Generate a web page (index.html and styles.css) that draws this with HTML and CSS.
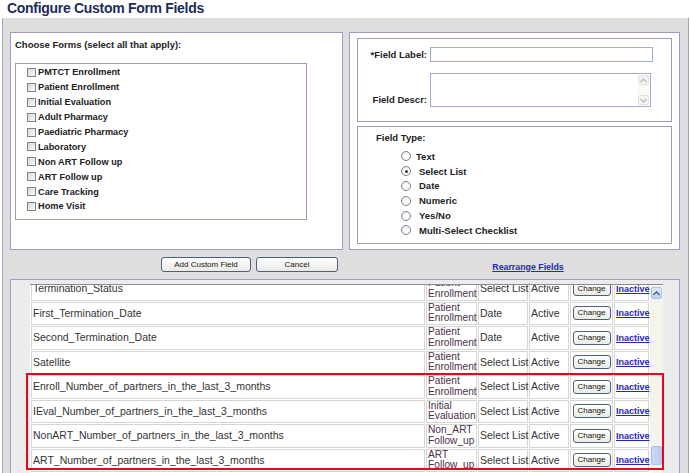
FILE: index.html
```html
<!DOCTYPE html>
<html>
<head>
<meta charset="utf-8">
<title>Configure Custom Form Fields</title>
<link rel="stylesheet" href="styles.css">
</head>
<body>
<h1 class="title">Configure Custom Form Fields</h1>
<div class="page">
  <div class="top">
    <section class="panel forms">
      <div class="label">Choose Forms (select all that apply):</div>
      <div class="formlist">
        <label class="check"><span class="cb"></span>PMTCT Enrollment</label>
        <label class="check"><span class="cb"></span>Patient Enrollment</label>
        <label class="check"><span class="cb"></span>Initial Evaluation</label>
        <label class="check"><span class="cb"></span>Adult Pharmacy</label>
        <label class="check"><span class="cb"></span>Paediatric Pharmacy</label>
        <label class="check"><span class="cb"></span>Laboratory</label>
        <label class="check"><span class="cb"></span>Non ART Follow up</label>
        <label class="check"><span class="cb"></span>ART Follow up</label>
        <label class="check"><span class="cb"></span>Care Tracking</label>
        <label class="check"><span class="cb"></span>Home Visit</label>
      </div>
    </section>
    <section class="panel fields">
      <div class="box1">
        <span class="flabel mid">*Field Label:</span>
        <span class="input"></span>
        <span class="flabel end">Field Descr:</span>
        <div class="ta">
          <div class="tscroll">
            <span class="tarr"><svg width="7" height="5" viewBox="0 0 7 5"><path d="M0.5 4 L3.5 1 L6.5 4" fill="none" stroke="#b9b9b9" stroke-width="1.2"/></svg></span>
            <span class="tarr"><svg width="7" height="5" viewBox="0 0 7 5"><path d="M0.5 1 L3.5 4 L6.5 1" fill="none" stroke="#b9b9b9" stroke-width="1.2"/></svg></span>
          </div>
        </div>
      </div>
      <div class="box2">
        <div class="label">Field Type:</div>
        <div class="radios">
          <div class="radio"><span class="rb"></span><span>Text</span></div>
          <div class="radio"><span class="rb on"></span><span class="pad">Select List</span></div>
          <div class="radio"><span class="rb"></span><span class="pad">Date</span></div>
          <div class="radio"><span class="rb"></span><span class="pad">Numeric</span></div>
          <div class="radio"><span class="rb"></span><span class="pad">Yes/No</span></div>
          <div class="radio"><span class="rb"></span><span class="pad">Multi-Select Checklist</span></div>
        </div>
      </div>
    </section>
  </div>
  <div class="actions">
    <div class="btns">
      <button class="btn add">Add Custom Field</button>
      <button class="btn cancel">Cancel</button>
    </div>
    <div class="rearr"><a href="#">Rearrange Fields</a></div>
  </div>
  <section class="panel list">
    <div class="scroller">
      <div class="viewport">
        <table class="grid">
          <colgroup>
            <col class="c-name"><col class="c-form"><col class="c-type"><col class="c-stat"><col class="c-chg"><col class="c-inact">
          </colgroup>
          <tbody>
            <tr><td>Termination_Status</td><td class="form">Patient Enrollment</td><td>Select List</td><td>Active</td><td class="chg"><button class="btn small">Change</button></td><td class="inact"><a href="#">Inactive</a></td></tr>
            <tr><td>First_Termination_Date</td><td class="form">Patient Enrollment</td><td>Date</td><td>Active</td><td class="chg"><button class="btn small">Change</button></td><td class="inact"><a href="#">Inactive</a></td></tr>
            <tr><td>Second_Termination_Date</td><td class="form">Patient Enrollment</td><td>Date</td><td>Active</td><td class="chg"><button class="btn small">Change</button></td><td class="inact"><a href="#">Inactive</a></td></tr>
            <tr><td>Satellite</td><td class="form">Patient Enrollment</td><td>Select List</td><td>Active</td><td class="chg"><button class="btn small">Change</button></td><td class="inact"><a href="#">Inactive</a></td></tr>
            <tr><td>Enroll_Number_of_partners_in_the_last_3_months</td><td class="form">Patient Enrollment</td><td>Select List</td><td>Active</td><td class="chg"><button class="btn small">Change</button></td><td class="inact"><a href="#">Inactive</a></td></tr>
            <tr><td>IEval_Number_of_partners_in_the_last_3_months</td><td class="form">Initial Evaluation</td><td>Select List</td><td>Active</td><td class="chg"><button class="btn small">Change</button></td><td class="inact"><a href="#">Inactive</a></td></tr>
            <tr><td>NonART_Number_of_partners_in_the_last_3_months</td><td class="form">Non_ART Follow_up</td><td>Select List</td><td>Active</td><td class="chg"><button class="btn small">Change</button></td><td class="inact"><a href="#">Inactive</a></td></tr>
            <tr><td>ART_Number_of_partners_in_the_last_3_months</td><td class="form">ART Follow_up</td><td>Select List</td><td>Active</td><td class="chg"><button class="btn small">Change</button></td><td class="inact"><a href="#">Inactive</a></td></tr>
          </tbody>
        </table>
      </div>
      <div class="vbar">
        <span class="vbtn"><svg width="7" height="5" viewBox="0 0 7 5"><path d="M0.5 4 L3.5 1 L6.5 4" fill="none" stroke="#4d5f86" stroke-width="1.4"/></svg></span>
        <span class="thumb"></span>
      </div>
    </div>
    <div class="highlight"></div>
  </section>
</div>
</body>
</html>
```

FILE: styles.css
```css
html, body {
  margin: 0;
  padding: 0;
}
body {
  width: 690px;
  height: 473px;
  overflow: hidden;
  background: #ffffff;
  font-family: "Liberation Sans", Arial, sans-serif;
  color: #222222;
}
.title {
  margin: 0;
  height: 18px;
  padding-left: 7px;
  font-size: 14px;
  line-height: 17px;
  letter-spacing: -0.3px;
  font-weight: bold;
  color: #1d2b5c;
}
.page {
  margin-left: 2px;
  margin-right: 1px;
  border-left: 1px solid #a3a3c2;
  border-right: 1px solid #a3a3c2;
  background: #dedede;
  padding: 14px 8px 0 7px;
  height: 455px;
  box-sizing: border-box;
  overflow: hidden;
}
.top {
  display: grid;
  grid-template-columns: 333px 331px;
  column-gap: 6px;
  height: 218px;
}
.panel {
  border: 1px solid #9d9dc3;
  background: #ffffff;
  box-sizing: border-box;
}
.label {
  font-weight: bold;
  font-size: 9.5px;
  line-height: 12px;
  color: #222222;
}
.forms {
  padding: 6px 4px;
}
.formlist {
  margin-top: 12px;
  width: 292px;
  height: 157px;
  border: 1px solid #9d9dc3;
  box-sizing: border-box;
  padding: 1px 0 0 11px;
}
.check {
  display: flex;
  align-items: center;
  gap: 2px;
  height: 14.9px;
  font-weight: bold;
  font-size: 9.2px;
  color: #222222;
}
.cb {
  width: 9px;
  height: 9px;
  box-sizing: border-box;
  border: 1px solid #7b8393;
  background: linear-gradient(135deg, #d9d9d2, #fbfbf9);
}
.fields {
  padding: 5px 7px;
  display: flex;
  flex-direction: column;
  gap: 4px;
}
.box1 {
  height: 84px;
  box-sizing: border-box;
  border: 1px solid #9d9dc3;
  padding-top: 8px;
  display: grid;
  grid-template-columns: 69px 223px;
  column-gap: 3px;
  row-gap: 11px;
  align-content: start;
}
.flabel {
  font-weight: bold;
  font-size: 9.5px;
  line-height: 12px;
  text-align: right;
  color: #222222;
}
.flabel.mid {
  align-self: center;
}
.flabel.end {
  align-self: end;
  padding-bottom: 1px;
}
.input {
  height: 15px;
  box-sizing: border-box;
  border: 1px solid #a2abd3;
  background: #ffffff;
}
.ta {
  width: 221px;
  height: 34px;
  box-sizing: border-box;
  border: 1px solid #a2abd3;
  display: flex;
  justify-content: flex-end;
  padding: 1px;
}
.tscroll {
  width: 11px;
  display: flex;
  flex-direction: column;
  justify-content: space-between;
  background: #fafaf8;
}
.tarr {
  height: 10px;
  box-sizing: border-box;
  border: 1px solid #e3e3de;
  border-radius: 2px;
  background: #f3f3ef;
  display: flex;
  align-items: center;
  justify-content: center;
}
.box2 {
  flex: 1;
  border: 1px solid #9d9dc3;
  padding: 5px 0 0 18px;
}
.radios {
  margin-top: 5px;
  padding-left: 25px;
}
.radio {
  display: flex;
  align-items: center;
  gap: 5px;
  height: 14.8px;
  font-weight: bold;
  font-size: 9.5px;
  color: #222222;
}
.radio .pad {
  padding-left: 3px;
}
.rb {
  width: 10px;
  height: 10px;
  box-sizing: border-box;
  border-radius: 50%;
  border: 1px solid #76819a;
  background: radial-gradient(circle at 60% 60%, #ffffff 30%, #e2e2dc 100%);
  display: flex;
  align-items: center;
  justify-content: center;
}
.rb.on::after {
  content: "";
  width: 3px;
  height: 3px;
  border-radius: 50%;
  background: #333333;
}
.actions {
  display: grid;
  grid-template-columns: 333px 331px;
  column-gap: 6px;
  height: 29px;
  align-items: center;
}
.btns {
  display: flex;
  justify-content: flex-end;
  gap: 5px;
  padding-right: 5px;
}
.btn {
  height: 15px;
  padding: 0;
  font-family: "Liberation Sans", Arial, sans-serif;
  font-size: 8px;
  line-height: 13px;
  color: #111111;
  border: 1px solid #4f5f80;
  border-radius: 3px;
  background: linear-gradient(#ffffff, #ebeae4);
}
.btn.add {
  width: 90px;
}
.btn.cancel {
  width: 82px;
}
.rearr {
  text-align: center;
  padding-left: 27px;
}
.rearr a {
  font-weight: bold;
  font-size: 8.8px;
  color: #2626c9;
  text-decoration: underline;
}
.list {
  position: relative;
  height: 200px;
  background: #ececec;
  padding: 4px 0 0 19px;
}
.scroller {
  display: flex;
  width: 633px;
  height: 196px;
  border-top: 1px solid #8c8c8c;
  background: #ffffff;
}
.viewport {
  width: 620px;
  overflow: hidden;
}
.grid {
  width: 620px;
  table-layout: fixed;
  border-collapse: separate;
  border-spacing: 1px;
  margin-top: -9px;
  font-size: 10.5px;
  line-height: 10.7px;
  color: #333333;
}
.c-name { width: 394px; }
.c-form { width: 51px; }
.c-type { width: 50px; }
.c-stat { width: 40px; }
.c-chg { width: 43px; }
.c-inact { width: 35px; }
.grid tr {
  height: 23.5px;
}
.grid td {
  border: 1px solid #d6d6d3;
  padding: 0 1px;
  vertical-align: middle;
  white-space: nowrap;
  overflow: visible;
}
.grid td.form {
  white-space: normal;
  font-size: 10.2px;
  color: #4d2f4a;
}
.grid td.chg {
  text-align: center;
  padding: 0;
}
.btn.small {
  width: 38px;
  height: 14px;
  line-height: 12px;
}
.grid td.inact a {
  font-weight: bold;
  font-size: 9px;
  color: #2626c9;
  text-decoration: underline;
}
.vbar {
  width: 13px;
  background: #f4f4ef;
  display: flex;
  flex-direction: column;
  align-items: center;
}
.vbtn {
  margin-top: 2px;
  width: 11px;
  height: 12px;
  box-sizing: border-box;
  border: 1px solid #b3c2ea;
  border-radius: 2px;
  background: linear-gradient(#dfe8fd, #c2d1f6);
  display: flex;
  align-items: center;
  justify-content: center;
}
.thumb {
  margin-top: 147px;
  width: 11px;
  height: 19px;
  box-sizing: border-box;
  border: 1px solid #aebee8;
  border-radius: 2px;
  background: linear-gradient(90deg, #cad7f8, #bccbf3);
}
.highlight {
  position: absolute;
  left: 15px;
  top: 93px;
  width: 638px;
  height: 97px;
  box-sizing: border-box;
  border: 2px solid #e6061e;
  pointer-events: none;
}
```
